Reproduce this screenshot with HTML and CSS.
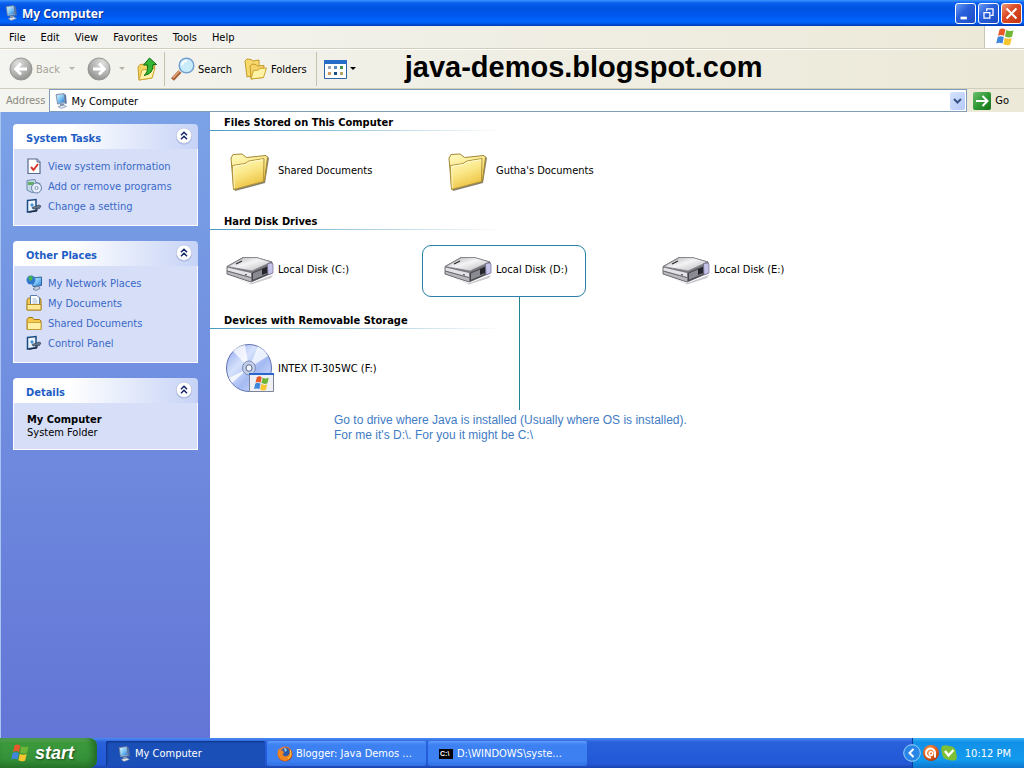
FILE: index.html
```html
<!DOCTYPE html>
<html lang="en">
<head>
    <meta charset="UTF-8">
    <meta name="viewport" content="width=device-width, initial-scale=1.0">
    <title>My Computer</title>
    <link rel="stylesheet" href="styles.css">
</head>
<body>
    <!-- shared icons -->
    <svg class="defs" aria-hidden="true">
        <defs>
            <linearGradient id="g-folder" x1="0" y1="0" x2="0.4" y2="1">
                <stop offset="0" stop-color="#fffbc4"/><stop offset="0.5" stop-color="#fbe88a"/><stop offset="1" stop-color="#edc443"/>
            </linearGradient>
            <linearGradient id="g-screen" x1="0" y1="0" x2="1" y2="1">
                <stop offset="0" stop-color="#d8f4ff"/><stop offset="0.5" stop-color="#7cc6f6"/><stop offset="1" stop-color="#2a78d0"/>
            </linearGradient>
            <linearGradient id="g-metal" x1="0" y1="0" x2="1" y2="1">
                <stop offset="0" stop-color="#a8a8ac"/><stop offset="0.45" stop-color="#f4f4f6"/><stop offset="1" stop-color="#b4b4b8"/>
            </linearGradient>
            <linearGradient id="g-disc" x1="0" y1="0" x2="1" y2="1">
                <stop offset="0" stop-color="#8aa0ea"/><stop offset="0.35" stop-color="#d6e2fc"/><stop offset="0.6" stop-color="#a4baf2"/><stop offset="1" stop-color="#dfe8fd"/>
            </linearGradient>
            <radialGradient id="g-gray" cx="0.35" cy="0.25" r="0.8">
                <stop offset="0" stop-color="#e0e0de"/><stop offset="0.6" stop-color="#b2b2b0"/><stop offset="1" stop-color="#8e8e8c"/>
            </radialGradient>
            <linearGradient id="g-green" x1="0" y1="0" x2="1" y2="1">
                <stop offset="0" stop-color="#6cc070"/><stop offset="0.5" stop-color="#2f9a36"/><stop offset="1" stop-color="#157018"/>
            </linearGradient>
            <radialGradient id="g-orange" cx="0.4" cy="0.3" r="0.8">
                <stop offset="0" stop-color="#ff9a4a"/><stop offset="0.6" stop-color="#dc5a18"/><stop offset="1" stop-color="#9a3008"/>
            </radialGradient>
        </defs>
        <symbol id="i-pc" viewBox="0 0 16 16">
            <path d="M3 1.500 11 .5l1 9.500-7.500 1z" fill="#a9b8cf" stroke="#5b7396" stroke-width=".6"/>
            <path d="M4 2.300 10.300 1.500l.8 7.500-6 .9z" fill="url(#g-screen)"/>
            <path d="M11.200.8 13 2l.8 8.500-1.800.2z" fill="#55749f"/>
            <path d="M7 11h4l.5 2H7z" fill="#8495b0"/>
            <path d="M5 13.500 11 12l2.500 1.500L8 15.500z" fill="#e3e9f3" stroke="#6b7f9f" stroke-width=".6"/>
        </symbol>
        <symbol id="i-flag" viewBox="0 0 20 20">
            <path d="M4.500 2.500Q7.500.6 10.300 2.600L9 9Q6.200 7.300 3 8.900z" fill="#e8592a"/>
            <path d="M11.300 3.100Q14.500 5 18.500 3.200L17 9.800Q13.500 11.300 10 9.500z" fill="#6fb536"/>
            <path d="M2.700 10Q6 8.400 8.800 10.200L7.500 16.600Q4.500 15 1.200 16.500z" fill="#3f86dc"/>
            <path d="M9.800 10.700Q13.200 12.400 16.700 11L15.200 17.400Q11.800 19.200 8.400 17.200z" fill="#f7c52e"/>
        </symbol>
        <symbol id="i-folder" viewBox="0 0 48 48">
            <path d="M9 45 39 37 43 12l-2-2-3 25-30 8z" fill="#5d553b" opacity=".75"/>
            <path d="M5 12 7 8.500l9-.5 4.500 3.500L40 9.500l1.500 2L38.500 35 7.500 42z" fill="url(#g-folder)" stroke="#a38730"/>
            <path d="M6.500 19.500 19 17.500l4-2.500 15-2.500L37.500 35.500 7.500 43.500z" fill="url(#g-folder)" stroke="#b3953b"/>
            <path d="M8.300 42 7.500 20.500l12-2 4-2.500 13.500-2.300" fill="none" stroke="#fffde0" stroke-width=".8"/>
        </symbol>
        <symbol id="i-drive" viewBox="0 0 48 48">
            <path d="M4 30 24 38.500 47 30l-2 3-20 6.500z" fill="#c9c9cd"/>
            <path d="M1 21.500 17 12.500h13L46 17v11L25 37 1 29z" fill="#77777d" stroke="#515157" stroke-width=".8"/>
            <path d="M1.500 21.500 17.500 12.500h13L45.500 17 26 26z" fill="url(#g-metal)" stroke="#7e7e84" stroke-width=".7"/>
            <path d="M1.500 22.500 25 28v4.500L1.500 26z" fill="#e4e4e8"/>
            <path d="M1.500 26.500 25 33v3.500L1.500 28.800z" fill="#b8b8be"/>
            <path d="M1.500 26 25 32.500" stroke="#5b5b60" stroke-width=".8"/>
            <path d="M26.500 28 41 22v7.500L26.500 35.500z" fill="#8a8a92" stroke="#34343a" stroke-width=".8"/>
            <path d="M36 24.200 41 22v6l-5 2z" fill="#24242c"/>
            <path d="M41.500 18.500 45.500 18q1.500 0 1.500 2v8L42 30z" fill="#c4c2e8" stroke="#5a5878" stroke-width=".6"/>
            <path d="M10 19 16 16" stroke="#2c2c30" stroke-width="1.300"/>
            <path d="M19 29.500l2 .5" stroke="#44444a" stroke-width="1.200"/>
        </symbol>
        <symbol id="i-cd" viewBox="0 0 48 48">
            <ellipse cx="23" cy="24" rx="22.500" ry="23.500" fill="url(#g-disc)" stroke="#6072b0"/>
            <path d="M23 24 7 7Q12 2 19 1zM23 24 41 38Q36 44 30 46z" fill="#fff" opacity=".75"/>
            <path d="M23 24 32 2.500Q39 6 42 12z" fill="#f4f9ff" opacity=".85"/>
            <path d="M23 24 3 34 6 39z" fill="#fff" opacity=".8"/>
            <ellipse cx="23" cy="24" rx="6.500" ry="7" fill="#c3cde6" stroke="#7c8cbc"/>
            <ellipse cx="23" cy="24" rx="3" ry="3.300" fill="#f3f5fb" stroke="#5c6a90"/>
            <path d="M23.500 29.500h24v18h-24z" fill="#eef0f6" stroke="#7b8499"/>
            <path d="M23 29h25v2H23z" fill="#2b66cc"/>
            <use href="#i-flag" x="27" y="31" width="17" height="17"/>
        </symbol>
        <symbol id="i-chevrons" viewBox="0 0 18 18">
            <circle cx="9" cy="9.500" r="8" fill="#8f9fce" opacity=".7"/>
            <circle cx="9" cy="8.700" r="7.700" fill="#fff" stroke="#b8c2e0" stroke-width=".7"/>
            <path d="M6 8.200 9 5.200l3 3M6 12.200l3-3 3 3" fill="none" stroke="#16276b" stroke-width="1.500"/>
        </symbol>
        <symbol id="i-setting" viewBox="0 0 16 16">
            <path d="M1.500 2.500 10 1.500v11L1.500 14z" fill="#eaf3fc" stroke="#1d4a80" stroke-width="1.500"/>
            <path d="M3 14.300 11 13V9" fill="none" stroke="#223" stroke-width="1"/>
            <path d="M4 7 6 5l2 2-2 2z" fill="#4b94d8"/>
            <path d="M6 9.500 13 7l2 1-1.500 2.500L7 11z" fill="#63768c" stroke="#25394f" stroke-width=".6"/>
        </symbol>
        <symbol id="i-mini-folder" viewBox="0 0 16 16">
            <path d="M1 4.500 2.500 2.500h4l1.500 2h5.500L15 6v8.500H1z" fill="#f5c94d" stroke="#a4780f"/>
            <path d="M1.500 7.500h13.500v7H1.500z" fill="#fff0a6" stroke="#c29728" stroke-width=".8"/>
        </symbol>
        <symbol id="i-arrow-circle" viewBox="0 0 24 24">
            <circle cx="12" cy="12" r="11" fill="url(#g-gray)" stroke="#969694"/>
            <path d="M18 12H7M12 6.500 6.500 12l5.500 5.500" fill="none" stroke="#fff" stroke-width="2.800"/>
        </symbol>
    </svg>

    <header class="titlebar">
        <svg class="icon16"><use href="#i-pc"/></svg>
        <h1>My Computer</h1>
        <div class="window-buttons">
            <button type="button" aria-label="Minimize"><svg viewBox="0 0 21 21"><path d="M5 15.500h7" stroke="#fff" stroke-width="3"/></svg></button>
            <button type="button" aria-label="Restore"><svg viewBox="0 0 21 21"><path d="M8.500 8V5.500h7v7H13M8 5.500h8M5.500 9.500h6.500v6H5.500zM5 9.500h7.500" fill="none" stroke="#fff" stroke-width="1.400"/></svg></button>
            <button type="button" class="close" aria-label="Close"><svg viewBox="0 0 21 21"><path d="M5 5l11 11M16 5L5 16" stroke="#fff" stroke-width="2.200"/></svg></button>
        </div>
    </header>

    <nav class="menubar">
        <button type="button">File</button>
        <button type="button">Edit</button>
        <button type="button">View</button>
        <button type="button">Favorites</button>
        <button type="button">Tools</button>
        <button type="button">Help</button>
        <div class="throbber"><svg viewBox="0 0 20 20"><use href="#i-flag"/></svg></div>
    </nav>

    <div class="toolbar">
        <button type="button" class="tool nav-back" disabled>
            <svg class="icon24"><use href="#i-arrow-circle"/></svg>Back
            <svg class="caret" viewBox="0 0 6 4"><path d="M0 0h6L3 3z" fill="#b5b3a5"/></svg>
        </button>
        <button type="button" class="tool nav-forward" disabled aria-label="Forward">
            <svg class="icon24 flip"><use href="#i-arrow-circle"/></svg>
            <svg class="caret" viewBox="0 0 6 4"><path d="M0 0h6L3 3z" fill="#b5b3a5"/></svg>
        </button>
        <button type="button" class="tool nav-up" aria-label="Up">
            <svg class="icon24" viewBox="0 0 24 24">
                <path d="M3 10 5 7.500l5-.5 2 2 8-1-3 13L4 23z" fill="#f4d464" stroke="#c89c2a"/>
                <path d="M4 23 7 13l13-2-3 10z" fill="#fff2a8" stroke="#d0a534"/>
                <path d="M9 18.500Q13 16 12.500 8H8.500L14.500 1l7 6.500H18Q18.500 17 9 18.500z" fill="#35b535" stroke="#0d7014"/>
            </svg>
        </button>
        <span class="separator"></span>
        <button type="button" class="tool search">
            <svg class="icon24" viewBox="0 0 24 24">
                <path d="M1.500 22.500 9 14.500" stroke="#a65f35" stroke-width="4"/>
                <path d="M2 21 8.500 14" stroke="#e6a77c" stroke-width="1.500"/>
                <circle cx="15.500" cy="8.500" r="7.300" fill="#c9ecfb" stroke="#739fd2" stroke-width="1.500"/>
                <path d="M11 8Q12 4 16 3.500" fill="none" stroke="#fff" stroke-width="2"/>
            </svg>Search
        </button>
        <button type="button" class="tool folders">
            <svg class="icon24" viewBox="0 0 24 24">
                <path d="M1 4 3 2l4 .5L9 4l6-1v14L3 20z" fill="#f8d96b" stroke="#c39a2b"/>
                <path d="M6 9 8 7l4 .5 1.500 1.500L20 8.500l-1 12L7 22z" fill="#f6d366" stroke="#c39a2b"/>
                <path d="M7 22 9.500 13.500l5-.5 1-1.500 7-.5-3 9.500z" fill="#fff3a5" stroke="#cca42f"/>
            </svg>Folders
        </button>
        <span class="separator"></span>
        <button type="button" class="tool views" aria-label="Views">
            <svg class="icon24" viewBox="0 0 24 24">
                <path d="M1.500 3.500h22v18h-22z" fill="#fff" stroke="#2b62a8"/>
                <path d="M1 3h23v4H1z" fill="#246cc8"/>
                <path d="M5 9h3v3H5z" fill="#9ca8b8"/><path d="M11 9h3v3h-3z" fill="#558cc8"/><path d="M17 9h3v3h-3z" fill="#3d9448"/>
                <path d="M5 15h3v3H5z" fill="#d39b60"/><path d="M11 15h3v3h-3z" fill="#174f85"/><path d="M17 15h3v3h-3z" fill="#b8a468"/>
            </svg>
            <svg class="caret" viewBox="0 0 6 4"><path d="M0 0h6L3 3z" fill="#000"/></svg>
        </button>
        <strong class="site-name">java-demos.blogspot.com</strong>
    </div>

    <form class="addressbar">
        <label for="address">Address</label>
        <div class="combo">
            <svg class="icon16"><use href="#i-pc"/></svg>
            <input type="text" id="address" value="My Computer">
            <button type="button" aria-label="Show addresses"><svg viewBox="0 0 9 7"><path d="M1 1l3.500 3.500L8 1" fill="none" stroke="#3a5486" stroke-width="2"/></svg></button>
        </div>
        <button type="button" class="go">
            <svg viewBox="0 0 18 18"><rect width="18" height="18" rx="2" fill="url(#g-green)"/><path d="M3 9h11M9.500 4 14.500 9l-5 5" fill="none" stroke="#fff" stroke-width="2"/></svg>Go
        </button>
    </form>

    <div class="explorer">
        <aside class="sidebar">
            <section class="panel">
                <header><h2>System Tasks</h2><button type="button" aria-label="Collapse System Tasks"><svg><use href="#i-chevrons"/></svg></button></header>
                <ul>
                    <li><a href="#"><svg class="icon16" viewBox="0 0 16 16"><path d="M2 1h9l3 3v11.500H2z" fill="#fff" stroke="#56698e" stroke-width="1.200"/><path d="M11 1v3h3" fill="#c4d2e8" stroke="#56698e"/><path d="M5 9l2.500 3L12 6" fill="none" stroke="#d9392c" stroke-width="2"/></svg>View system information</a></li>
                    <li><a href="#"><svg class="icon16" viewBox="0 0 16 16"><path d="M1 2.500 9 1.500l1 3 4 1v7L6 14.500 1 12z" fill="#c7daeb" stroke="#6886a6"/><path d="M2 4h6v3H2z" fill="#62b065"/><circle cx="10.500" cy="10" r="5" fill="#e5edf8" stroke="#667ea6"/><circle cx="10.500" cy="10" r="1.500" fill="#fff" stroke="#7b91b4"/></svg>Add or remove programs</a></li>
                    <li><a href="#"><svg class="icon16"><use href="#i-setting"/></svg>Change a setting</a></li>
                </ul>
            </section>
            <section class="panel">
                <header><h2>Other Places</h2><button type="button" aria-label="Collapse Other Places"><svg><use href="#i-chevrons"/></svg></button></header>
                <ul>
                    <li><a href="#"><svg class="icon16" viewBox="0 0 16 16"><path d="M6 3 15.500 2v8.500L7 11.500z" fill="url(#g-screen)" stroke="#35659e"/><circle cx="5" cy="5" r="4.500" fill="#3278cf"/><path d="M2 2.500Q5 0 7 2L6 5 3.500 6z" fill="#47b44c"/><path d="M10 11.500h3l1 2-4 2-3-1.500z" fill="#c5cde0" stroke="#546785" stroke-width=".7"/></svg>My Network Places</a></li>
                    <li><a href="#"><svg class="icon16" viewBox="0 0 16 16"><path d="M1 5 2.500 3H14l1 2v10H1z" fill="#f3c950" stroke="#9e761a"/><path d="M4.500.5H11L13.500 3v8h-9z" fill="#fff" stroke="#5b7dad"/><path d="M6.500 4h4M6.500 6h5M6.500 8h5" stroke="#86a3c9" stroke-width=".8"/><path d="M1 9.500h14V15H1z" fill="#ffe995" stroke="#b68b23"/></svg>My Documents</a></li>
                    <li><a href="#"><svg class="icon16"><use href="#i-mini-folder"/></svg>Shared Documents</a></li>
                    <li><a href="#"><svg class="icon16"><use href="#i-setting"/></svg>Control Panel</a></li>
                </ul>
            </section>
            <section class="panel">
                <header><h2>Details</h2><button type="button" aria-label="Collapse Details"><svg><use href="#i-chevrons"/></svg></button></header>
                <div class="details">
                    <strong>My Computer</strong>
                    <p>System Folder</p>
                </div>
            </section>
        </aside>

        <main class="content">
            <section class="group">
                <h2>Files Stored on This Computer</h2>
                <ul>
                    <li><a href="#"><svg><use href="#i-folder"/></svg>Shared Documents</a></li>
                    <li><a href="#"><svg><use href="#i-folder"/></svg>Gutha's Documents</a></li>
                </ul>
            </section>
            <section class="group">
                <h2>Hard Disk Drives</h2>
                <ul>
                    <li><a href="#"><svg><use href="#i-drive"/></svg>Local Disk (C:)</a></li>
                    <li class="marked">
                        <a href="#"><svg><use href="#i-drive"/></svg>Local Disk (D:)</a>
                        <p class="note">Go to drive where Java is installed (Usually where OS is installed).<br>For me it's D:\. For you it might be C:\</p>
                    </li>
                    <li><a href="#"><svg><use href="#i-drive"/></svg>Local Disk (E:)</a></li>
                </ul>
            </section>
            <section class="group">
                <h2>Devices with Removable Storage</h2>
                <ul>
                    <li><a href="#"><svg><use href="#i-cd"/></svg>INTEX IT-305WC (F:)</a></li>
                </ul>
            </section>
        </main>
    </div>

    <footer class="taskbar">
        <button type="button" class="start"><svg viewBox="0 0 20 20"><use href="#i-flag"/></svg>start</button>
        <div class="tasks">
            <button type="button" class="active"><svg class="icon16"><use href="#i-pc"/></svg>My Computer</button>
            <button type="button">
                <svg class="icon16" viewBox="0 0 16 16"><circle cx="8" cy="8" r="7.500" fill="url(#g-orange)"/><circle cx="8.500" cy="6.500" r="4.700" fill="#2c5aa8"/><path d="M7 2Q9 2 10 4L8 6z" fill="#9bd3f5"/><path d="M1 3 3.500 5 6 4.500 7 7 5.500 8.500Q7 11 10 10 13 9 12.500 4.500 15 6 14.500 10 12 15 7.500 15 2 14 .8 9z" fill="#ef8523"/><path d="M13 4Q15.500 9 11 13" fill="none" stroke="#ffd04a"/></svg>Blogger: Java Demos ...
            </button>
            <button type="button">
                <svg class="icon16" viewBox="0 0 16 16"><path d="M1 3h14v10H1z" fill="#000"/><text x="2" y="10" class="cmd-glyph">C:\</text></svg>D:\WINDOWS\syste...
            </button>
        </div>
        <div class="tray">
            <button type="button" aria-label="Show hidden icons"><svg viewBox="0 0 18 18"><circle cx="9" cy="9" r="8.300" fill="#2a86e6" stroke="#9ad4fa"/><path d="M10.500 5 6.500 9l4 4" fill="none" stroke="#fff" stroke-width="2"/></svg></button>
            <svg class="icon16" viewBox="0 0 16 16"><circle cx="8" cy="8" r="8" fill="url(#g-orange)"/><path d="M8 12.500A4.500 4.500 0 1 1 12 8v4.500" fill="none" stroke="#fff" stroke-width="2"/><circle cx="8" cy="8.500" r="1.800" fill="none" stroke="#fff" stroke-width="1.500"/></svg>
            <svg class="icon16" viewBox="0 0 16 16"><path d="M1 1Q5-.5 8 1q7 0 7 7 1.500 4 0 7-4 1-7 0Q1 14 1 8-.5 4 1 1z" fill="#7dbf35"/><path d="M4 6l3.500 4.500L12.500 5" fill="none" stroke="#fff" stroke-width="2.400"/></svg>
            <time datetime="22:12">10:12 PM</time>
        </div>
    </footer>
</body>
</html>
```

FILE: styles.css
```css
*, *::before, *::after {
    box-sizing: border-box;
}
body {
    margin: 0;
    height: 100vh;
    display: flex;
    flex-direction: column;
    font-family: "DejaVu Sans Condensed", "DejaVu Sans", Tahoma, sans-serif;
    font-size: 11px;
    line-height: 13px;
    color: #000;
    background: #fff;
    overflow: hidden;
}
h1, h2, p, ul {
    margin: 0;
    padding: 0;
    font-size: 11px;
}
ul {
    list-style: none;
}
a {
    color: inherit;
    text-decoration: none;
}
button, input {
    font: inherit;
    color: inherit;
    margin: 0;
    padding: 0;
    border: 0;
    background: none;
}
svg {
    display: block;
    flex: none;
}
.defs {
    position: absolute;
    width: 0;
    height: 0;
}
.icon16 {
    width: 16px;
    height: 16px;
}
.icon24 {
    width: 24px;
    height: 24px;
}

/* title bar */
.titlebar {
    display: flex;
    align-items: center;
    flex: none;
    height: 26px;
    padding: 0 2px 0 3px;
    gap: 3px;
    color: #fff;
    background: linear-gradient(#3d95ff 0, #0a5fee 3px, #0053e1 8px, #0058ee 15px, #0066ff 22px, #0050d8 24px, #003bb5 26px);
}
.titlebar h1 {
    font-family: "Noto Sans", sans-serif;
    font-size: 12px;
    text-shadow: 1px 1px #0a2f8c;
}
.window-buttons {
    display: flex;
    gap: 2px;
    margin-left: auto;
}
.window-buttons button {
    width: 21px;
    height: 21px;
    border: 1px solid #fff;
    border-radius: 3px;
    background: linear-gradient(135deg, #6b9cf4, #2a60dc 40%, #1c4cc4);
}
.window-buttons .close {
    background: linear-gradient(135deg, #f09a7c, #dc4c26 40%, #c23510);
}

/* menu and toolbars */
.menubar {
    display: flex;
    align-items: center;
    flex: none;
    height: 23px;
    padding-left: 9px;
    gap: 15px;
    background: linear-gradient(90deg, #f4f4f1, #ece9d8);
    border-bottom: 1px solid #d2cebc;
}
.throbber {
    display: flex;
    align-items: center;
    justify-content: center;
    align-self: stretch;
    width: 40px;
    margin-left: auto;
    background: #fff;
    border-left: 1px solid #c8c5b4;
}
.throbber svg {
    width: 20px;
    height: 20px;
}
.toolbar {
    display: flex;
    align-items: center;
    flex: none;
    height: 40px;
    padding-left: 9px;
    background: linear-gradient(90deg, #f4f4f0, #ece9d8);
    border-top: 1px solid #fff;
    border-bottom: 1px solid #d2cebc;
}
.tool {
    display: flex;
    align-items: center;
    gap: 3px;
}
.tool:disabled {
    color: #a5a396;
}
.caret {
    width: 6px;
    height: 4px;
}
.nav-back .caret {
    margin-left: 6px;
}
.nav-forward {
    margin-left: 12px;
    gap: 8px;
}
.flip {
    transform: scaleX(-1);
}
.nav-up {
    margin-left: 10px;
}
.separator {
    width: 1px;
    height: 34px;
    margin: 0 6px;
    background: #c4c1b0;
}
.nav-up + .separator {
    margin-left: 5px;
}
.folders {
    margin-left: 12px;
}
.folders + .separator {
    margin-left: 9px;
}
.site-name {
    margin-left: 49px;
    font-family: "Liberation Sans", Arial, sans-serif;
    font-size: 29px;
    line-height: 32px;
    padding-bottom: 5px;
}
.addressbar {
    display: flex;
    align-items: center;
    flex: none;
    height: 23px;
    padding-left: 6px;
    background: linear-gradient(90deg, #f4f4f0, #ece9d8);
}
.addressbar label {
    color: #8a887c;
}
.combo {
    display: flex;
    align-items: center;
    align-self: stretch;
    flex: 1;
    margin-left: 4px;
    padding: 1px 1px 0 3px;
    gap: 2px;
    background: #fff;
    border: 1px solid #7f9db9;
}
.combo input {
    flex: 1;
    min-width: 0;
}
.combo button {
    display: flex;
    align-items: center;
    justify-content: center;
    width: 15px;
    height: 18px;
    border-radius: 2px;
    background: linear-gradient(135deg, #d6e2fd, #b3c9f7);
}
.combo button svg {
    width: 9px;
    height: 7px;
}
.go {
    display: flex;
    align-items: center;
    gap: 4px;
    padding: 0 15px 0 6px;
}
.go svg {
    width: 18px;
    height: 18px;
}

/* task pane */
.explorer {
    display: flex;
    flex: 1;
    min-height: 0;
}
.sidebar {
    display: flex;
    flex-direction: column;
    flex: none;
    gap: 15px;
    width: 210px;
    padding: 12px;
    border-left: 1px solid #a9c4f0;
    background: linear-gradient(#7ba2e7, #6375d6);
}
.panel {
    border-radius: 4px 4px 0 0;
    overflow: hidden;
}
.panel header {
    display: flex;
    align-items: center;
    justify-content: space-between;
    height: 25px;
    padding: 3px 5px 0 13px;
    background: linear-gradient(90deg, #fff 30%, #c6d3f7);
}
.panel h2 {
    color: #215dc6;
}
.panel header button {
    align-self: flex-start;
}
.panel header svg {
    width: 18px;
    height: 18px;
}
.panel ul, .details {
    background: #d6dff7;
    border: 1px solid #fff;
    border-top: 0;
}
.panel ul {
    padding: 7px 12px 9px;
    color: #3a68c8;
}
.panel li a {
    display: flex;
    align-items: center;
    gap: 6px;
    height: 20px;
}
.details {
    padding: 10px 13px;
}

/* file groups */
.content {
    flex: 1;
    min-width: 0;
}
.group h2 {
    height: 19px;
    padding: 4px 0 0 14px;
    background: linear-gradient(90deg, #4a9ac0, #fff) left bottom / 294px 1px no-repeat;
}
.group ul {
    display: grid;
    grid-template-columns: repeat(auto-fill, 218px);
    padding: 15px 0 17px 16px;
}
.group li {
    position: relative;
}
.group a {
    display: flex;
    align-items: center;
    gap: 4px;
}
.group svg {
    width: 48px;
    height: 48px;
}

/* callout drawn over the marked drive */
.marked::before {
    content: "";
    position: absolute;
    left: -22px;
    top: 0;
    width: 164px;
    height: 52px;
    border: 1px solid #2a7fa8;
    border-radius: 9px;
}
.marked::after {
    content: "";
    position: absolute;
    left: 75px;
    top: 52px;
    width: 1px;
    height: 113px;
    background: #1f8590;
}
.note {
    position: absolute;
    left: -110px;
    top: 168px;
    white-space: nowrap;
    font-family: "Liberation Sans", Arial, sans-serif;
    font-size: 12px;
    line-height: 15px;
    color: #3f7cc4;
}

/* task bar */
.taskbar {
    display: flex;
    flex: none;
    height: 30px;
    color: #fff;
    background: linear-gradient(#4a8cf4 0, #2a62dc 4px, #245cd9 15px, #2458d4 26px, #1a44b0);
}
.start {
    display: flex;
    align-items: center;
    gap: 5px;
    width: 97px;
    padding: 0 0 0 10px;
    border-radius: 0 8px 8px 0;
    font-family: "Liberation Sans", Arial, sans-serif;
    font-size: 18px;
    font-weight: bold;
    font-style: italic;
    line-height: 20px;
    text-shadow: 1px 1px 2px #1c4a1c;
    background: linear-gradient(#6cb86c 0, #3c9a3c 5px, #36923a 20px, #2a7a2a);
    box-shadow: inset -4px 0 6px #226a26;
}
.start svg {
    width: 20px;
    height: 20px;
}
.tasks {
    display: flex;
    flex: 1;
    gap: 2px;
    min-width: 0;
    padding: 3px 0 2px 9px;
}
.tasks button {
    display: flex;
    align-items: center;
    gap: 3px;
    width: 159px;
    padding-left: 10px;
    border-radius: 2px;
    white-space: nowrap;
    background: linear-gradient(#5e9cfa 0, #3c80f2 4px, #3c80f2 20px, #3270e0);
}
.tasks .active {
    background: #1b4fb8;
    box-shadow: inset 1px 1px 2px #0e3282;
}
.cmd-glyph {
    font-family: "Liberation Sans", sans-serif;
    font-size: 7px;
    font-weight: bold;
    fill: #fff;
}
.tray {
    display: flex;
    align-items: center;
    gap: 2px;
    padding-right: 13px;
    background: linear-gradient(#3cb4f4 0, #1290e8 4px, #129aee 22px, #0e76cc);
    border-left: 1px solid #0c3c9c;
}
.tray button {
    margin-left: -10px;
}
.tray button svg {
    width: 18px;
    height: 18px;
}
.tray time {
    margin-left: 6px;
}
```
